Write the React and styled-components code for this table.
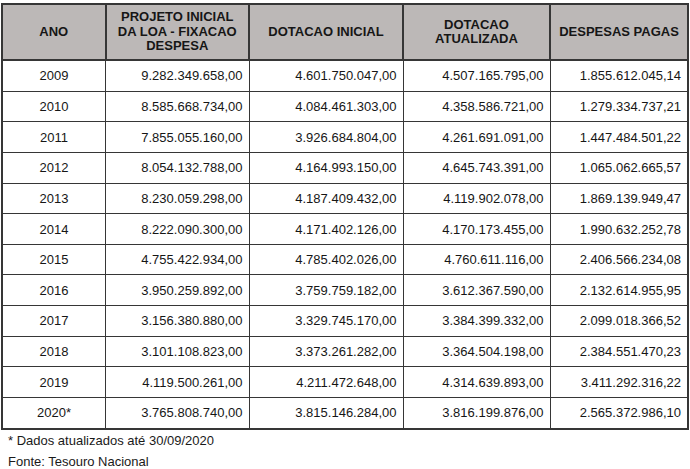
import React from "react";
import styled, { createGlobalStyle } from "styled-components";

const Global = createGlobalStyle`
  html, body { margin: 0; padding: 0; background: #fff; }
  body { font-family: "Liberation Sans", Arial, sans-serif; color: #1a1a1a; }
`;

const Page = styled.div`
  width: 690px;
  height: 469px;
  padding: 3px 0 0 1px;
  box-sizing: border-box;
  overflow: hidden;
`;

const Table = styled.table`
  border-collapse: collapse;
  table-layout: fixed;
  width: 686px;
  font-size: 13px;
  border: 2px solid #363636;
`;

const HeadCell = styled.th`
  background: #bcb8b7;
  border: 2px solid #363636;
  font-weight: bold;
  font-size: 13px;
  line-height: 14.5px;
  text-align: center;
  vertical-align: middle;
  padding: 0 4px;
  height: 54px;
  color: #161616;
`;

const Cell = styled.td`
  border: 1.5px solid #363636;
  height: 29.65px;
  padding: 0 ${(p) => (p.$center ? "0" : "6px")} 0 0;
  text-align: ${(p) => (p.$center ? "center" : "right")};
  vertical-align: middle;
  color: #161616;
  white-space: nowrap;
`;

const Notes = styled.div`
  padding: 0 0 0 7px;
  font-size: 13px;
  line-height: 21.5px;
  color: #1a1a1a;
`;

const rows = [
  ["2009", "9.282.349.658,00", "4.601.750.047,00", "4.507.165.795,00", "1.855.612.045,14"],
  ["2010", "8.585.668.734,00", "4.084.461.303,00", "4.358.586.721,00", "1.279.334.737,21"],
  ["2011", "7.855.055.160,00", "3.926.684.804,00", "4.261.691.091,00", "1.447.484.501,22"],
  ["2012", "8.054.132.788,00", "4.164.993.150,00", "4.645.743.391,00", "1.065.062.665,57"],
  ["2013", "8.230.059.298,00", "4.187.409.432,00", "4.119.902.078,00", "1.869.139.949,47"],
  ["2014", "8.222.090.300,00", "4.171.402.126,00", "4.170.173.455,00", "1.990.632.252,78"],
  ["2015", "4.755.422.934,00", "4.785.402.026,00", "4.760.611.116,00", "2.406.566.234,08"],
  ["2016", "3.950.259.892,00", "3.759.759.182,00", "3.612.367.590,00", "2.132.614.955,95"],
  ["2017", "3.156.380.880,00", "3.329.745.170,00", "3.384.399.332,00", "2.099.018.366,52"],
  ["2018", "3.101.108.823,00", "3.373.261.282,00", "3.364.504.198,00", "2.384.551.470,23"],
  ["2019", "4.119.500.261,00", "4.211.472.648,00", "4.314.639.893,00", "3.411.292.316,22"],
  ["2020*", "3.765.808.740,00", "3.815.146.284,00", "3.816.199.876,00", "2.565.372.986,10"],
];

const widths = [103.5, 143.5, 154, 147, 138];

export default function App() {
  return (
    <Page>
      <Global />
      <Table>
        <colgroup>
          {widths.map((w, i) => (
            <col key={i} style={{ width: w }} />
          ))}
        </colgroup>
        <thead>
          <tr>
            <HeadCell>ANO</HeadCell>
            <HeadCell>
              PROJETO INICIAL
              <br />
              DA LOA - FIXACAO
              <br />
              DESPESA
            </HeadCell>
            <HeadCell>DOTACAO INICIAL</HeadCell>
            <HeadCell>
              DOTACAO
              <br />
              ATUALIZADA
            </HeadCell>
            <HeadCell>DESPESAS PAGAS</HeadCell>
          </tr>
        </thead>
        <tbody>
          {rows.map((r) => (
            <tr key={r[0]}>
              <Cell $center>{r[0]}</Cell>
              <Cell>{r[1]}</Cell>
              <Cell>{r[2]}</Cell>
              <Cell>{r[3]}</Cell>
              <Cell>{r[4]}</Cell>
            </tr>
          ))}
        </tbody>
      </Table>
      <Notes>
        <div>* Dados atualizados até 30/09/2020</div>
        <div>Fonte: Tesouro Nacional</div>
      </Notes>
    </Page>
  );
}
